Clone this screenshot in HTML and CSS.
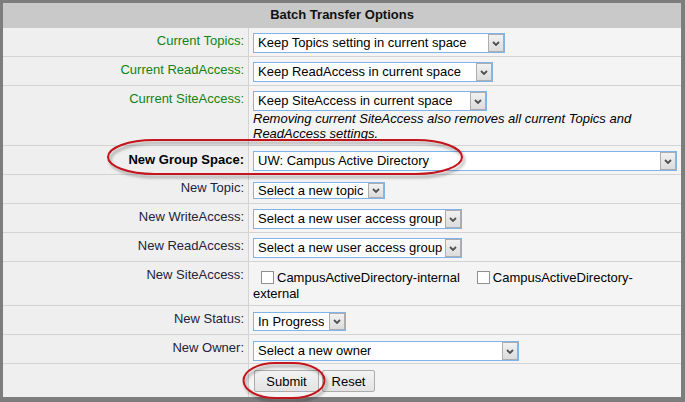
FILE: index.html
```html
<!DOCTYPE html>
<html>
<head>
<meta charset="utf-8">
<title>Batch Transfer Options</title>
<link rel="stylesheet" href="styles.css">
</head>
<body>
<div class="frame">
  <div class="head">Batch Transfer Options</div>

  <div class="row">
    <div class="lab cur">Current Topics:</div>
    <div class="val">
      <div class="sel w-topics"><span class="sel-txt">Keep Topics setting in current space</span><span class="sel-btn"><svg width="8" height="5" viewBox="0 0 8 5"><polyline points="1,1 4,4 7,1"/></svg></span></div>
    </div>
  </div>

  <div class="row">
    <div class="lab cur">Current ReadAccess:</div>
    <div class="val">
      <div class="sel w-read"><span class="sel-txt">Keep ReadAccess in current space</span><span class="sel-btn"><svg width="8" height="5" viewBox="0 0 8 5"><polyline points="1,1 4,4 7,1"/></svg></span></div>
    </div>
  </div>

  <div class="row row-note">
    <div class="lab cur">Current SiteAccess:</div>
    <div class="val">
      <div class="sel w-site"><span class="sel-txt">Keep SiteAccess in current space</span><span class="sel-btn"><svg width="8" height="5" viewBox="0 0 8 5"><polyline points="1,1 4,4 7,1"/></svg></span></div>
      <p class="note">Removing current SiteAccess also removes all current Topics and ReadAccess settings.</p>
    </div>
  </div>

  <div class="row row-group">
    <div class="lab strong">New Group Space:</div>
    <div class="val">
      <div class="sel w-group"><span class="sel-txt">UW: Campus Active Directory</span><span class="sel-btn"><svg width="8" height="5" viewBox="0 0 8 5"><polyline points="1,1 4,4 7,1"/></svg></span></div>
    </div>
  </div>

  <div class="row">
    <div class="lab">New Topic:</div>
    <div class="val val-low">
      <div class="sel sel-small w-newtopic"><span class="sel-txt">Select a new topic</span><span class="sel-btn"><svg width="8" height="5" viewBox="0 0 8 5"><polyline points="1,1 4,4 7,1"/></svg></span></div>
    </div>
  </div>

  <div class="row">
    <div class="lab">New WriteAccess:</div>
    <div class="val">
      <div class="sel w-group-sel"><span class="sel-txt">Select a new user access group</span><span class="sel-btn"><svg width="8" height="5" viewBox="0 0 8 5"><polyline points="1,1 4,4 7,1"/></svg></span></div>
    </div>
  </div>

  <div class="row">
    <div class="lab">New ReadAccess:</div>
    <div class="val">
      <div class="sel w-group-sel"><span class="sel-txt">Select a new user access group</span><span class="sel-btn"><svg width="8" height="5" viewBox="0 0 8 5"><polyline points="1,1 4,4 7,1"/></svg></span></div>
    </div>
  </div>

  <div class="row row-checks">
    <div class="lab">New SiteAccess:</div>
    <div class="val val-checks">
      <div class="checks"><label class="chk first"><input type="checkbox"><span>CampusActiveDirectory-internal</span></label><label class="chk second"><input type="checkbox"><span>CampusActiveDirectory-</span></label><span class="wrap-part">external</span></div>
    </div>
  </div>

  <div class="row">
    <div class="lab">New Status:</div>
    <div class="val val-mid">
      <div class="sel sel-status w-status"><span class="sel-txt">In Progress</span><span class="sel-btn"><svg width="8" height="5" viewBox="0 0 8 5"><polyline points="1,1 4,4 7,1"/></svg></span></div>
    </div>
  </div>

  <div class="row">
    <div class="lab">New Owner:</div>
    <div class="val val-mid">
      <div class="sel w-owner"><span class="sel-txt">Select a new owner</span><span class="sel-btn"><svg width="8" height="5" viewBox="0 0 8 5"><polyline points="1,1 4,4 7,1"/></svg></span></div>
    </div>
  </div>

  <div class="row row-btns">
    <div class="lab"></div>
    <div class="val val-btns">
      <button class="btn btn-submit" type="button">Submit</button>
      <button class="btn btn-reset" type="button">Reset</button>
    </div>
  </div>
</div>

<svg class="marks" width="685" height="402" viewBox="0 0 685 402">
  <defs>
    <filter id="sh" x="-10%" y="-30%" width="120%" height="170%">
      <feDropShadow dx="2" dy="3" stdDeviation="1.6" flood-color="#000" flood-opacity="0.35"/>
    </filter>
  </defs>
  <rect x="108" y="140" width="354" height="34" rx="46" ry="17" class="ring" filter="url(#sh)"/>
  <rect x="243.5" y="363" width="81" height="35" rx="32" ry="17.5" class="ring" filter="url(#sh)"/>
</svg>
</body>
</html>
```

FILE: styles.css
```css
* { box-sizing: border-box; }

html, body {
  margin: 0;
  padding: 0;
}

body {
  width: 685px;
  height: 402px;
  position: relative;
  overflow: hidden;
  font-family: "Liberation Sans", Arial, sans-serif;
  font-size: 13px;
  color: #000;
  background: #7d7d7d;
}

.frame {
  width: 685px;
  height: 402px;
  border-style: solid;
  border-color: #7d7d7d;
  border-width: 3px 4px 5px 3px;
  background: #f3f3f3;
  display: flex;
  flex-direction: column;
}

.head {
  height: 25px;
  flex: none;
  background: #c9c9c9;
  text-align: center;
  font-weight: bold;
  font-size: 13px;
  line-height: 24px;
  color: #111;
}

.row {
  display: grid;
  grid-template-columns: 246px 1fr;
  height: 29px;
  flex: none;
  border-bottom: 1px solid #d3d3d3;
}

.row-note { height: 60px; }
.row-group { height: 29px; }
.row-checks { height: 44px; }
.row-btns { height: 34px; border-bottom: none; flex: 1; }

.lab {
  background: #efefef;
  border-right: 1px solid #d3d3d3;
  text-align: right;
  padding: 5px 4px 0 0;
  line-height: 16px;
  color: #22223c;
  white-space: nowrap;
}

.lab.cur { color: #118311; }
.lab.strong { font-weight: bold; color: #000; padding-top: 6px; }

.val {
  background: #f4f4f4;
  padding: 5px 4px 0 4px;
}

.val-low { padding-top: 7px; }
.val-mid { padding-top: 6px; }
.val-checks { padding-top: 8px; }
.val-btns { padding: 6px 0 0 5px; display: flex; gap: 3px; align-items: flex-start; }

.sel {
  display: flex;
  align-items: stretch;
  justify-content: space-between;
  height: 20px;
  border: 1px solid #7eb4ea;
  background: #fff;
  line-height: 18px;
  white-space: nowrap;
}

.sel-small { height: 17px; line-height: 15px; }
.sel-status { height: 19px; line-height: 17px; }

.sel-txt {
  padding-left: 4px;
  overflow: hidden;
}

.sel-btn {
  flex: none;
  width: 16px;
  border: 1px solid #adadad;
  background: linear-gradient(#f1f1f1, #dcdcdc);
  display: flex;
  align-items: center;
  justify-content: center;
}

.sel-btn svg polyline {
  fill: none;
  stroke: #505050;
  stroke-width: 1.8;
}

.w-topics { width: 252px; }
.w-read { width: 240px; }
.w-site { width: 234px; }
.w-group { width: 424px; }
.w-newtopic { width: 132px; }
.w-group-sel { width: 209px; }
.w-status { width: 93px; }
.w-owner { width: 266px; }

.note {
  margin: 0;
  font-style: italic;
  line-height: 15px;
  max-width: 410px;
}

.checks {
  line-height: 16px;
  max-width: 400px;
}

.chk input {
  -webkit-appearance: none;
  appearance: none;
  width: 13px;
  height: 13px;
  margin: 0 3px 0 0;
  border: 1px solid #8e8f8f;
  background: #fff;
  vertical-align: -2px;
}

.chk.first { margin-left: 8px; }
.chk.second { margin-left: 17px; }

.btn {
  font-family: "Liberation Sans", Arial, sans-serif;
  font-size: 13px;
  color: #000;
  height: 22px;
  padding: 0;
  border: 1px solid #acacac;
  border-radius: 2px;
  background: linear-gradient(#f3f3f3, #e3e3e3);
}

.btn-submit { width: 65px; }
.btn-reset { width: 53px; }

.marks {
  position: absolute;
  left: 0;
  top: 0;
  pointer-events: none;
}

.ring {
  fill: none;
  stroke: #c3131b;
  stroke-width: 2;
}
```
